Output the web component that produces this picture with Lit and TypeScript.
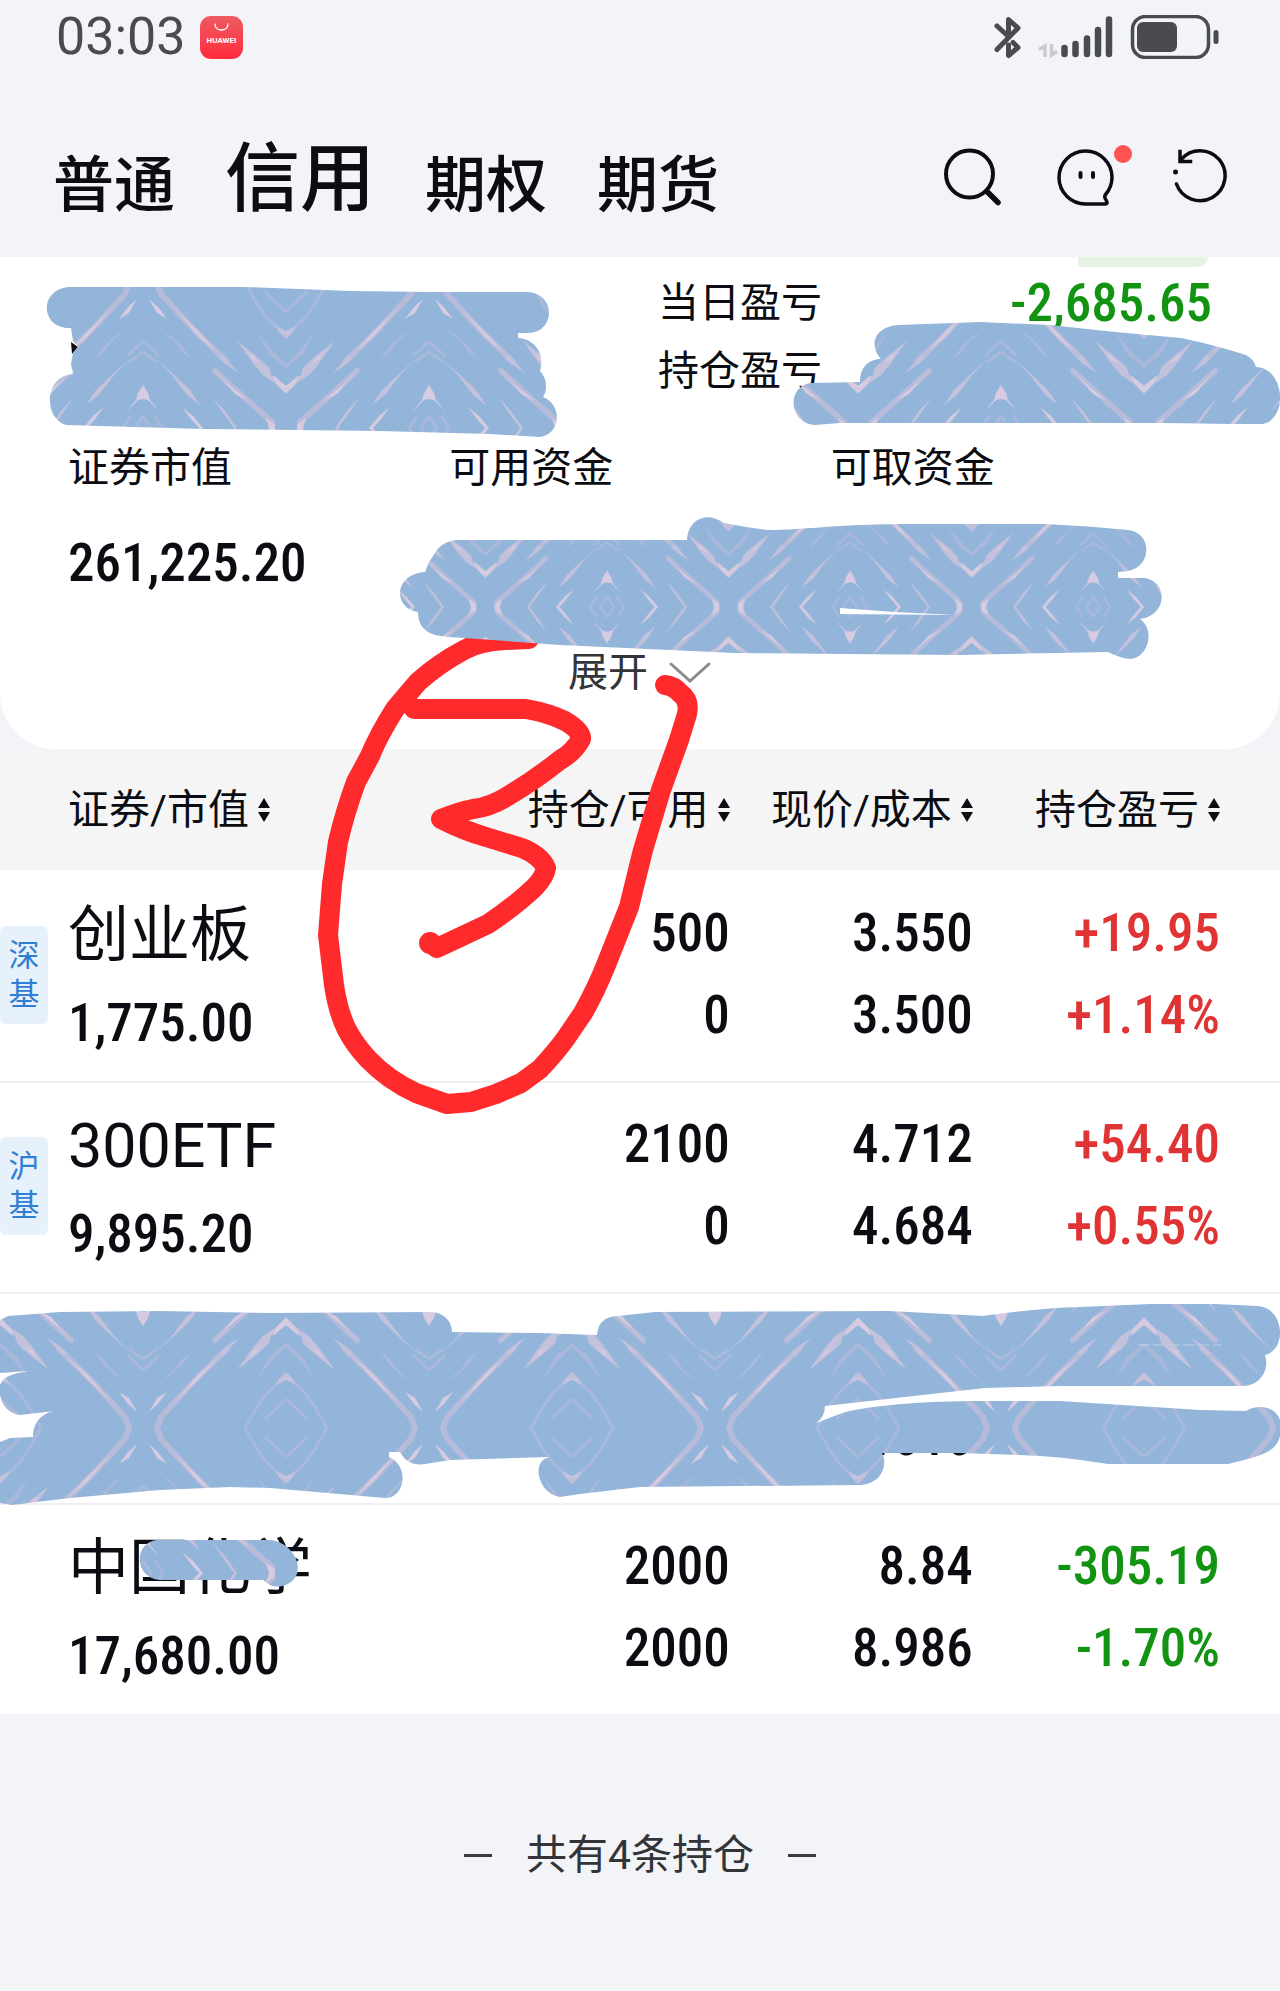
import { LitElement, html, css, svg, nothing } from "lit";
import { customElement } from "lit/decorators.js";
import { classMap } from "lit/directives/class-map.js";

interface Holding {
  market: string;
  name: string;
  value: string;
  amount: [string, string];
  price: [string, string];
  profit: [string, string];
}

const HOLDINGS: Holding[] = [
  { market: "深基", name: "创业板", value: "1,775.00", amount: ["500", "0"], price: ["3.550", "3.500"], profit: ["+19.95", "+1.14%"] },
  { market: "沪基", name: "300ETF", value: "9,895.20", amount: ["2100", "0"], price: ["4.712", "4.684"], profit: ["+54.40", "+0.55%"] },
  { market: "", name: "", value: "", amount: ["", ""], price: ["", "4.1010"], profit: ["", ""] },
  { market: "", name: "中国化学", value: "17,680.00", amount: ["2000", "2000"], price: ["8.84", "8.986"], profit: ["-305.19", "-1.70%"] },
];

const COLUMNS = ["证券/市值", "持仓/可用", "现价/成本", "持仓盈亏"];
const TABS = ["普通", "信用", "期权", "期货"];

/* Marker strokes drawn by hand over the page. */
@customElement("marker-layer")
export class MarkerLayer extends LitElement {
  static styles = css`
    :host { display: block; pointer-events: none; }
    .canvas { display: block; width: 100%; height: auto; }
    .pen { fill: none; stroke: #ff2a2c; stroke-width: 20; stroke-linecap: round; stroke-linejoin: round; }
    .base { fill: #93b5da; }
    .soft { fill: none; stroke: #a9b8db; stroke-width: 3; }
    .mid { fill: none; stroke: #b5bbd9; stroke-width: 6; stroke-linecap: round; }
    .haze { fill: #abb8da; }
    .pale { fill: #c4c1dc; }
    .light { fill: #d6cbe1; }
    .paper { fill: #ffffff; }
    .ink { fill: #0b0d12; }
  `;

  private quarter() {
    return svg`
      <g id="quarter">
        <path class="mid" d="M14 145 L18 134 L52 97 L84 66"></path>
        <path class="pale" d="M80 73 L96 55 L88 60 L76 70Z"></path>
        <path class="mid" d="M72 57 L104 28 L129 6 V0"></path>
        <path class="light" d="M30 121 L56 96 L76 74 L56 91Z"></path>
        <path class="light" d="M67 64 L84 45 L106 27 L92 34Z M123 10 L132 4 V0 H126Z"></path>
        <path class="light" d="M6 129 L15 121 L24 109 L14 115Z"></path>
        <path class="haze" d="M16 100 L28 92 L38 83 L49 69 L40 75 L32 86Z"></path>
        <path class="soft" d="M0 87 L16 72 M0 76 L14 66"></path>
        <path class="pale" d="M12 70 L30 54 L47 38 L57 23 L44 33 L28 54Z"></path>
        <path class="light" d="M0 43 L5 35 L7 28 L17 16 L5 28 L0 29Z"></path>
        <path class="light" d="M39 21 L50 12 L60 0 H56 L48 9Z"></path>
        <path class="pale" d="M69 31 L82 17 L94 0 H91 L80 15Z"></path>
        <path class="soft" d="M12 12 L20 0 M0 12 L8 0"></path>
        <path class="soft" d="M102 145 L114 124 L124 110 L143 92"></path>
        <path class="pale" d="M133 102 L143 97 V89 L136 96Z"></path>
        <path class="soft" d="M122 136 L143 116"></path>
        <path class="haze" d="M114 97 L127 80 L143 64 V60 L126 74Z"></path>
        <path class="pale" d="M94 87 L108 76 L118 68 L126 60 L128 53 L143 42 V34 L132 45 L120 53 L112 62Z"></path>
        <path class="light" d="M130 53 L143 42 V35 L133 45Z M106 76 L117 65 L110 68Z"></path>
      </g>`;
  }

  private tile() {
    return svg`
      <rect width="286" height="290" class="base"></rect>
      <use href="#quarter"></use>
      <use href="#quarter" transform="translate(286 0) scale(-1 1)"></use>
      <use href="#quarter" transform="translate(0 290) scale(1 -1)"></use>
      <use href="#quarter" transform="translate(286 290) scale(-1 -1)"></use>`;
  }

  render() {
    return html`
      <svg class="canvas" viewBox="0 0 1280 1991" aria-hidden="true">
        <defs>
          ${this.quarter()}
          <pattern id="tape-top" width="286" height="290" patternUnits="userSpaceOnUse" patternTransform="translate(143 428)">${this.tile()}</pattern>
          <pattern id="tape-mid" width="286" height="290" patternUnits="userSpaceOnUse" patternTransform="translate(607 607) scale(0.85)">${this.tile()}</pattern>
          <pattern id="tape-low" width="286" height="290" patternUnits="userSpaceOnUse" patternTransform="translate(143 1573)">${this.tile()}</pattern>
        </defs>

        <path class="pen" d="M529 639 L505 640 Q480 641 464 650 Q438 664 418 682 L395 709 Q378 736 370 756 L356 782 Q345 812 338 842 L332 884 L328 935 L334 985 Q338 1012 347 1030 Q355 1045 368 1059 Q388 1080 416 1093 L447 1104 L471 1102 L496 1094 L521 1083 L540 1069 Q556 1052 566 1038 L583 1013 Q596 990 606 965 L629 907 L643 850 L661 790 L679 740 L687 714 Q690 700 680 693 Q674 686 665 685"></path>
        <path class="pen" d="M414 709 H526 Q549 713 565 721 Q582 731 581 739 Q574 752 560 760 Q535 780 508 796 Q490 807 473 809 Q458 812 441 819 Q465 831 486 837 L522 848 Q541 856 546 868 Q545 876 535 887 Q515 906 488 924 L437 948 L431 943"></path>
        <circle cx="430" cy="943" r="11" fill="#ff2a2c"></circle>

        <path class="ink" d="M71 342 L78 347 L72 354Z"></path>
        <path fill="url(#tape-top)" d="M68 287 H245 L350 291 L430 292 H528 C556 294 556 332 528 333 H518 V338 C536 339 545 355 540 371 C548 379 547 392 543 397 C562 404 562 434 540 437 L490 434 L380 431 L204 429 L66 425 C43 418 44 376 73 374 L71 364 L73 353 L78 347 L73 341 L71 328 H66 C40 325 40 290 68 287Z"></path>
        <path fill="url(#tape-top)" d="M899 325 L980 322 L1050 325 L1115 332 L1181 338 Q1215 345 1246 355 Q1254 359 1256 367 C1286 368 1288 421 1262 424 H1231 L1165 423 H840 L815 425 C787 423 787 384 812 383 L860 382 C860 368 868 359 881 359 C868 345 875 326 899 325Z"></path>
        <path fill="url(#tape-mid)" d="M456 540 H687 C688 520 706 510 724 523 Q748 528 770 530 C800 530 830 525 900 524 H1044 Q1090 526 1128 530 C1152 532 1153 566 1128 571 L1118 572 V578 H1145 C1168 582 1168 615 1140 619 C1156 630 1148 658 1130 659 Q1120 658 1108 652 L960 655 L735 653 L560 645 L450 637 C430 636 418 630 418 612 C393 609 393 574 425 572 L429 562 C437 552 437 543 456 540Z"></path>
        <path class="paper" d="M840 608 L895 612 L955 615 L840 614Z"></path>
        <path fill="url(#tape-low)" d="M0 1320 L8 1316 L60 1312 L160 1311 L270 1313 L432 1312 C445 1313 452 1322 452 1332 L540 1333 L597 1335 C598 1322 606 1316 618 1316 L655 1312 L890 1311 L983 1316 Q1040 1308 1080 1307 L1150 1304 H1215 L1258 1306 C1285 1308 1287 1350 1265 1355 C1270 1370 1260 1386 1243 1386 H1060 L985 1388 L825 1406 Q825 1417 816 1423 L845 1412 Q890 1402 970 1401 H1060 L1200 1410 L1246 1411 C1260 1402 1283 1408 1281 1430 C1279 1450 1268 1455 1228 1464 H1108 Q1060 1456 1020 1455 L960 1453 H882 C888 1465 882 1484 860 1485 L640 1487 L580 1494 L560 1497 C538 1494 530 1460 550 1457 L450 1460 L425 1464 C412 1466 404 1460 400 1452 H389 V1457 C410 1466 405 1498 385 1498 L270 1488 L230 1487 L160 1490 L70 1498 L12 1505 L0 1503 V1442 L10 1438 L33 1437 C33 1422 42 1413 55 1411 L20 1415 C10 1414 2 1406 0 1395 V1385 C4 1375 14 1374 28 1371 L0 1373Z"></path>
        <path fill="url(#tape-low)" d="M157 1540 H270 C285 1541 298 1555 298 1568 C298 1582 282 1590 270 1585 L263 1580 H160 C134 1578 133 1543 157 1540Z"></path>
        <path d="M1138 1345 H1222" stroke="#bcd0e8" stroke-width="1" stroke-dasharray="12 3"></path>
      </svg>`;
  }
}

@customElement("app-root")
export class AppRoot extends LitElement {
  static styles = css`
    :host {
      display: block;
      position: relative;
      min-height: 100vh;
      overflow: hidden;
      background: #f2f4f8;
      color: #0b0d12;
      font-family: Roboto, "Noto Sans CJK SC", sans-serif;
      font-size: 41px;
      font-weight: 400;
    }
    button { border: 0; padding: 0; margin: 0; background: none; color: inherit; font: inherit; cursor: pointer; }
    svg { display: block; }
    .status { display: flex; align-items: center; justify-content: space-between; padding: 7px 61px 0 56px; line-height: 60px; }
    .status-side { display: flex; align-items: center; gap: 14px; }
    .clock { font-size: 52px; color: #4a4b50; }
    .nav { display: flex; align-items: center; justify-content: space-between; padding: 55px 52px 21px 53px; }
    .tabs { display: flex; align-items: flex-end; gap: 50px; line-height: 100px; }
    .tab { font-size: 61px; font-weight: 500; }
    .tab.active { font-size: 75px; line-height: 114px; }
    .tools { display: flex; align-items: center; gap: 55px; padding-bottom: 4px; }
    .tool { position: relative; }
    .dot { position: absolute; top: -3px; right: -17px; width: 18px; height: 18px; border-radius: 50%; background: #ff5252; }
    .card { background: #ffffff; border-radius: 0 0 56px 56px; padding-bottom: 46px; }
    .pnl { display: flex; flex-direction: column; position: relative; padding: 12px 68px 33px 51.4%; line-height: 68px; }
    .pnl-row { display: flex; justify-content: space-between; }
    .tag { position: absolute; top: 0; right: 72px; width: 130px; height: 10px; background: #e6f3e4; border-radius: 0 0 24px 0; }
    .num { font-family: "Roboto Condensed", Roboto, sans-serif; font-size: 53px; font-weight: 500; }
    .up { color: #e03434; }
    .down { color: #129412; }
    .funds { display: grid; grid-template-columns: repeat(3, 1fr); padding: 0 68px; row-gap: 35px; line-height: 60px; }
    .expand { display: flex; align-items: center; gap: 20px; margin: 50px auto 0; line-height: 60px; font-size: 40px; color: #333438; }
    .holdings { width: 100%; border-collapse: separate; border-spacing: 0; table-layout: fixed; background: #ffffff; }
    .col-name { width: 38%; }
    .col-price { width: 19%; }
    .col-profit { width: 24%; }
    th { background: #f5f5f5; padding: 1px 0 0; font-weight: 400; text-align: right; line-height: 120px; }
    th:first-child { text-align: left; padding-left: 68px; }
    th:last-child { padding-right: 60px; }
    .sort { display: inline-flex; align-items: center; gap: 9px; white-space: nowrap; }
    td { padding: 22px 0 25px; vertical-align: top; text-align: right; line-height: 82px; }
    td:last-child { padding-right: 60px; }
    td:first-child { padding: 21px 0 14px; text-align: left; line-height: 88px; }
    tr + tr td { border-top: 2px solid #f0f0f1; padding-top: 20px; }
    tr + tr td:first-child { padding-top: 19px; }
    .line { display: block; min-height: 82px; }
    .security { display: flex; align-items: center; gap: 20px; min-height: 176px; }
    .security.plain { padding-left: 68px; }
    .market { box-sizing: border-box; width: 48px; margin-bottom: 8px; padding: 10px 8px; border-radius: 6px; background: #e7f1fc; color: #2f80d2; font-size: 31px; line-height: 39px; text-align: center; word-break: break-all; }
    .name { font-size: 61px; }
    .footer { display: flex; align-items: center; justify-content: center; gap: 34px; padding: 111px 0; line-height: 60px; color: #333438; }
    .dash { width: 28px; height: 3px; background: #3a3b3f; }
    .marks { position: absolute; top: 0; left: 0; width: 100%; }
  `;

  private statusBar() {
    return html`
      <div class="status">
        <div class="status-side">
          <span class="clock">03:03</span>
          <svg width="43" height="43" viewBox="0 0 43 43" role="img" aria-label="HUAWEI">
            <defs><linearGradient id="store" x2="0" y2="1"><stop stop-color="#ee5a60"></stop><stop offset="1" stop-color="#ff2c3c"></stop></linearGradient></defs>
            <rect width="43" height="43" rx="11" fill="url(#store)"></rect>
            <path d="M15 8 C15 16 28 16 28 8" fill="none" stroke="#fff" stroke-width="1.3" stroke-linecap="round"></path>
            <text x="21.500" y="27" text-anchor="middle" font-family="Roboto, sans-serif" font-weight="700" font-size="8" fill="#fff">HUAWEI</text>
          </svg>
        </div>
        <svg width="225" height="44" viewBox="994 14 225 44" role="img" aria-label="蓝牙 信号 电量">
          <g fill="none" stroke="#4a4b50" stroke-width="5" stroke-linecap="round" stroke-linejoin="round">
            <path d="M997 25 L1009 36 M1008.500 33 V18.500 L1018 27 L997 48.500 M1013 41.500 L1018 46.500 L1008.500 54.500 V44"></path>
          </g>
          <g fill="none" stroke="#c9cacf" stroke-width="3.500">
            <path d="M1039 48.500 L1045 45 V56 M1051.500 43 V54 L1057 50.500"></path>
          </g>
          <g stroke="#4a4b50" stroke-width="6.500" stroke-linecap="round">
            <path d="M1064.500 47 V53 M1075.500 43 V53 M1087 37.500 V53 M1098 29 V53 M1109 18.500 V53"></path>
          </g>
          <rect x="1132.500" y="15.500" width="76" height="41" rx="13" fill="none" stroke="#4a4b50" stroke-width="3.500"></rect>
          <rect x="1137" y="21" width="40" height="30" rx="6" fill="#4a4b50"></rect>
          <rect x="1213.500" y="29" width="5" height="14" rx="2.500" fill="#4a4b50"></rect>
        </svg>
      </div>`;
  }

  private nav() {
    return html`
      <nav class="nav">
        <div class="tabs">
          ${TABS.map((t) => html`<button class=${classMap({ tab: true, active: t === "信用" })}>${t}</button>`)}
        </div>
        <div class="tools">
          <button class="tool" aria-label="搜索">
            <svg width="58" height="58" viewBox="945 148 58 58" fill="none" stroke="#0b0d12" stroke-linecap="round">
              <circle cx="970.500" cy="174" r="23.500" stroke-width="4"></circle>
              <path d="M988 191.500 L999 202.500" stroke-width="5.500"></path>
            </svg>
          </button>
          <button class="tool" aria-label="消息">
            <svg width="58" height="58" viewBox="1058 148 58 58" fill="none" stroke="#0b0d12" stroke-linecap="round" stroke-linejoin="round">
              <path d="M1087 204 A26.500 26.500 0 1 1 1113 177.500 Q1113 187 1106.500 194.500 Q1105 197 1106.500 199 L1108 202 Q1108.500 204 1106 204 Z" stroke-width="3.500"></path>
              <path d="M1081.500 173 V177 M1094 173 V177" stroke-width="4"></path>
            </svg>
            <span class="dot"></span>
          </button>
          <button class="tool" aria-label="刷新">
            <svg width="58" height="58" viewBox="1170 148 58 58" fill="none" stroke="#0b0d12" stroke-linecap="round">
              <path d="M1176.500 184 A25 25 0 1 0 1181 159.500" stroke-width="3.500"></path>
              <path d="M1180 151.500 V161.500 H1190.500" stroke-width="3.500" stroke-linecap="square"></path>
              <circle cx="1175.500" cy="172" r="2.500" fill="#0b0d12" stroke="none"></circle>
            </svg>
          </button>
        </div>
      </nav>`;
  }

  private row(h: Holding) {
    const tone = (v: string) => classMap({ num: true, line: true, up: v.startsWith("+"), down: v.startsWith("-") });
    return html`
      <tr>
        <td>
          <div class=${classMap({ security: true, plain: !h.market })}>
            ${h.market ? html`<span class="market">${h.market}</span>` : nothing}
            <div>
              <div class="name">${h.name}</div>
              <div class="num">${h.value}</div>
            </div>
          </div>
        </td>
        <td>${h.amount.map((v) => html`<span class="num line">${v}</span>`)}</td>
        <td>${h.price.map((v) => html`<span class="num line">${v}</span>`)}</td>
        <td>${h.profit.map((v) => html`<span class=${tone(v)}>${v}</span>`)}</td>
      </tr>`;
  }

  render() {
    return html`
      ${this.statusBar()} ${this.nav()}
      <main>
        <section class="card">
          <div class="pnl">
            <span class="tag"></span>
            <div class="pnl-row"><span>当日盈亏</span><span class="num down">-2,685.65</span></div>
            <div class="pnl-row"><span>持仓盈亏</span></div>
          </div>
          <div class="funds">
            <span>证券市值</span><span>可用资金</span><span>可取资金</span>
            <span class="num">261,225.20</span>
          </div>
          <button class="expand">
            展开
            <svg width="44" height="22" viewBox="0 0 44 22" fill="none" stroke="#8a8b8f" stroke-width="3" stroke-linecap="round"><path d="M3 2 L22 19 L41 2"></path></svg>
          </button>
        </section>
        <table class="holdings">
          <colgroup><col class="col-name" /><col /><col class="col-price" /><col class="col-profit" /></colgroup>
          <thead>
            <tr>
              ${COLUMNS.map((c) => html`
                <th scope="col">
                  <button class="sort">${c}<svg width="12" height="24" viewBox="0 0 12 24" fill="#0b0d12"><path d="M6 0 L12 10 H0Z M0 14 H12 L6 24Z"></path></svg></button>
                </th>`)}
            </tr>
          </thead>
          <tbody>${HOLDINGS.map((h) => this.row(h))}</tbody>
        </table>
      </main>
      <footer class="footer"><span class="dash"></span><span>共有4条持仓</span><span class="dash"></span></footer>
      <marker-layer class="marks"></marker-layer>`;
  }
}
